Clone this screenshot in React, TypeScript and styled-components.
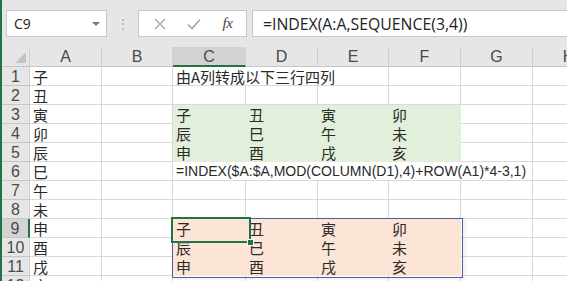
import styled, { createGlobalStyle } from "styled-components"

const GlobalStyle = createGlobalStyle`
  html, body {
    margin: 0;
    padding: 0;
    background: #e6e6e6;
  }
  body {
    font-family: "Liberation Sans", "Noto Sans CJK SC", sans-serif;
  }
`

const GREEN = "#217346"
const COL_WIDTHS = [72, 71, 73, 72, 71, 72, 72, 72]
const LETTERS = ["A", "B", "C", "D", "E", "F", "G", "H"]
const ROW_H = 19
const HEAD_H = 20
const ROWHEAD_W = 28

type Fill = "green" | "orange" | undefined
type CellData = { col: number; text: string; span?: number; fill?: Fill; latin?: boolean }

const ZHI = ["子", "丑", "寅", "卯", "辰", "巳", "午", "未", "申", "酉", "戌", "亥"]

const block = (start: number, fill: Fill): CellData[] =>
  [0, 1, 2, 3].map((i) => ({ col: 2 + i, text: ZHI[start + i], fill }))

const rows: CellData[][] = [
  [{ col: 2, text: "由A列转成以下三行四列", span: 3 }],
  [],
  block(0, "green"),
  block(4, "green"),
  block(8, "green"),
  [{ col: 2, text: "=INDEX($A:$A,MOD(COLUMN(D1),4)+ROW(A1)*4-3,1)", span: 5, latin: true }],
  [],
  [],
  block(0, "orange"),
  block(4, "orange"),
  block(8, "orange"),
  [],
].map((r, i) => [{ col: 0, text: ZHI[i] }, ...r])

const Window = styled.div`
  width: 567px;
  height: 281px;
  overflow: hidden;
  border-left: 2px solid ${GREEN};
  box-sizing: border-box;
  background: #e6e6e6;
  display: flex;
  flex-direction: column;
`

const FormulaBar = styled.div`
  height: 47px;
  flex: none;
  display: flex;
  align-items: flex-start;
  padding: 10px 0 0 4px;
  box-sizing: border-box;
`

const Field = styled.div`
  height: 27px;
  box-sizing: border-box;
  background: #fff;
  border: 1px solid #c8c8c8;
  display: flex;
  align-items: center;
`

const NameBox = styled(Field)`
  width: 101px;
  justify-content: space-between;
  padding: 0 6px 0 7px;
  font-family: "Open Sans", "Liberation Sans", sans-serif;
  font-size: 14px;
  color: #222;
`

const Caret = styled.span`
  width: 0;
  height: 0;
  border-left: 4px solid transparent;
  border-right: 4px solid transparent;
  border-top: 4px solid #777;
`

const Grip = styled.div`
  width: 31px;
  height: 27px;
  display: flex;
  align-items: center;
  justify-content: center;
  color: #b0b0b0;
  font-size: 14px;
`

const FxBox = styled(Field)`
  width: 109px;
  justify-content: space-around;
  padding: 0 3px 0 4px;
`

const FxLabel = styled.span`
  font-family: "Liberation Serif", serif;
  font-style: italic;
  font-size: 15px;
  color: #444;
  letter-spacing: -0.5px;
`

const FormulaInput = styled(Field)`
  flex: 1;
  margin-left: 5px;
  border-right: none;
  padding-left: 10px;
  font-family: "Open Sans", "Liberation Sans", sans-serif;
  font-size: 15.8px;
  color: #222;
`

const Sheet = styled.div`
  position: relative;
  flex: 1;
  display: grid;
  grid-template-columns: ${ROWHEAD_W}px ${COL_WIDTHS.map((w) => w + "px").join(" ")};
  grid-template-rows: ${HEAD_H}px;
  grid-auto-rows: ${ROW_H}px;
  background: #fff;
`

const Header = styled.div<{ $active?: boolean; $side?: "col" | "row" }>`
  box-sizing: border-box;
  background: ${(p) => (p.$active ? "#d3d3d3" : "#e6e6e6")};
  border-right: 1px solid #cfcfcf;
  border-bottom: 1px solid #c6c6c6;
  ${(p) => p.$active && p.$side === "col" && `border-bottom: 2px solid ${GREEN};`}
  ${(p) => p.$active && p.$side === "row" && `border-right: 2px solid ${GREEN};`}
  display: flex;
  align-items: center;
  justify-content: center;
  font-family: "Liberation Sans", sans-serif;
  font-size: 16px;
  color: #4a4a4a;
  line-height: 1;
  padding-top: 1px;
`

const Corner = styled(Header)`
  position: relative;
  &::after {
    content: "";
    position: absolute;
    right: 3px;
    bottom: 3px;
    border-left: 11px solid transparent;
    border-bottom: 11px solid #c4c4c4;
  }
`

const FILLS = { green: "#e2efda", orange: "#fce4d6" }

const Cell = styled.div<{ $fill?: Fill; $span?: number; $latin?: boolean }>`
  box-sizing: border-box;
  grid-column: span ${(p) => p.$span ?? 1};
  background: ${(p) => (p.$fill ? FILLS[p.$fill] : "#fff")};
  border-right: 1px solid ${(p) => (p.$fill ? FILLS[p.$fill] : "#d9d9d9")};
  border-bottom: 1px solid ${(p) => (p.$fill ? FILLS[p.$fill] : "#d9d9d9")};
  padding: 0 0 0 3px;
  white-space: nowrap;
  overflow: hidden;
  font-family: ${(p) =>
    p.$latin ? `"Liberation Sans", sans-serif` : `"Noto Sans CJK SC", sans-serif`};
  font-size: ${(p) => (p.$latin ? "14px" : "15px")};
  line-height: 19px;
  color: #2a2a2a;
`

const Spill = styled.div`
  position: absolute;
  border: 1px solid #4f5e9c;
  box-shadow: 2px 1px 4px rgba(80, 90, 150, 0.12);
  pointer-events: none;
`

const Selection = styled.div`
  position: absolute;
  border: 2px solid ${GREEN};
  pointer-events: none;
  &::after {
    content: "";
    position: absolute;
    right: -5px;
    bottom: -5px;
    width: 5px;
    height: 5px;
    background: ${GREEN};
    border: 1px solid #fff;
  }
`

const colLeft = (c: number) => ROWHEAD_W + COL_WIDTHS.slice(0, c).reduce((a, b) => a + b, 0)
const rowTop = (r: number) => HEAD_H + r * ROW_H

function XIcon() {
  return (
    <svg width="12" height="12" viewBox="0 0 12 12">
      <path d="M1 1L11 11M11 1L1 11" stroke="#a6a6a6" strokeWidth="1.4" fill="none" />
    </svg>
  )
}

function CheckIcon() {
  return (
    <svg width="14" height="12" viewBox="0 0 14 12">
      <path d="M1 6.5L5 10.5L13 1.5" stroke="#a6a6a6" strokeWidth="1.6" fill="none" />
    </svg>
  )
}

export default function App() {
  const selCol = 2
  const selRow = 8
  return (
    <Window>
      <GlobalStyle />
      <FormulaBar>
        <NameBox>
          <span>C9</span>
          <Caret />
        </NameBox>
        <Grip>⋮</Grip>
        <FxBox>
          <XIcon />
          <CheckIcon />
          <FxLabel>fx</FxLabel>
        </FxBox>
        <FormulaInput>=INDEX(A:A,SEQUENCE(3,4))</FormulaInput>
      </FormulaBar>
      <Sheet>
        <Corner />
        {LETTERS.map((l, i) => (
          <Header key={l} $side="col" $active={i === selCol}>
            {l}
          </Header>
        ))}
        {rows.map((cells, r) => {
          const out = [
            <Header key={`h${r}`} $side="row" $active={r === selRow}>
              {r + 1}
            </Header>,
          ]
          let c = 0
          while (c < COL_WIDTHS.length) {
            const cell = cells.find((x) => x.col === c)
            const span = cell?.span ?? 1
            out.push(
              <Cell key={`${r}-${c}`} $fill={cell?.fill} $span={span} $latin={cell?.latin}>
                {cell?.text}
              </Cell>
            )
            c += span
          }
          return out
        })}
        <Spill
          style={{
            left: colLeft(2) - 1,
            top: rowTop(8) - 1,
            width: colLeft(6) - colLeft(2) + 1,
            height: ROW_H * 3 + 1,
          }}
        />
        <Selection
          style={{
            left: colLeft(selCol) - 2,
            top: rowTop(selRow) - 2,
            width: COL_WIDTHS[selCol] + 3,
            height: ROW_H + 3,
          }}
        />
      </Sheet>
    </Window>
  )
}
